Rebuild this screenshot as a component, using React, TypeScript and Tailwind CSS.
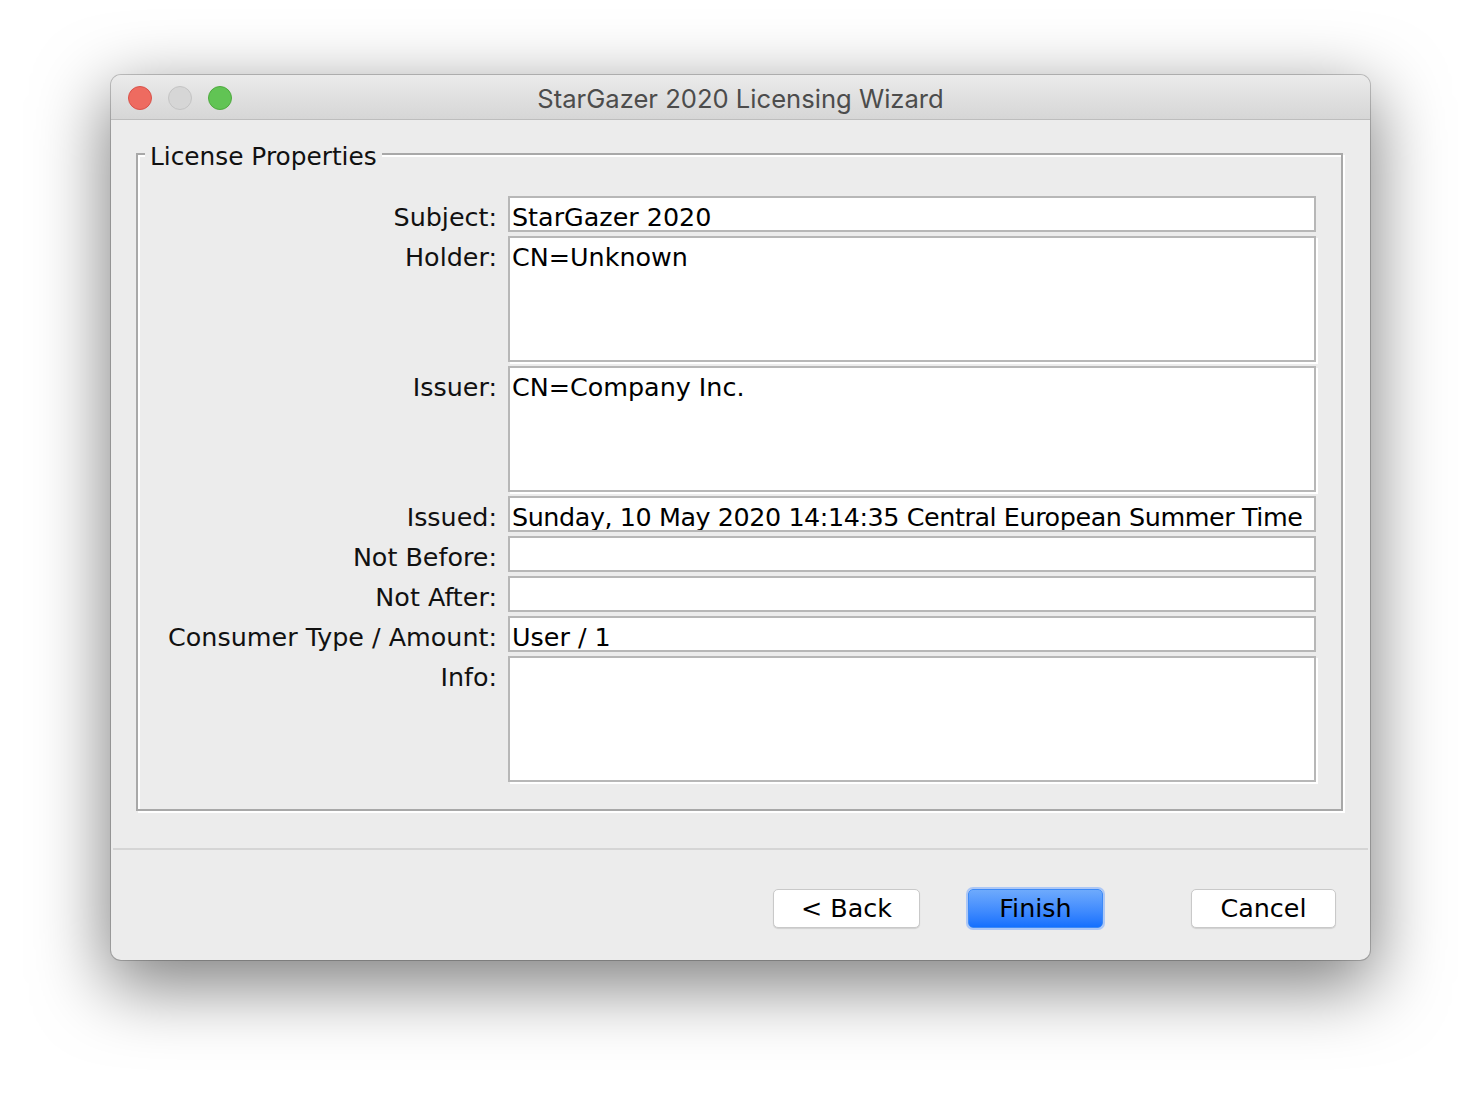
import React from "react";

const ui = { fontFamily: '"DejaVu Sans", "Noto Sans", sans-serif' };
const titleFont = { fontFamily: 'Inter, "Noto Sans", sans-serif' };

type Row = { label: string; value: string; tall?: boolean; tight?: boolean };

const rows: Row[] = [
  { label: "Subject:", value: "StarGazer 2020" },
  { label: "Holder:", value: "CN=Unknown", tall: true },
  { label: "Issuer:", value: "CN=Company Inc.", tall: true },
  { label: "Issued:", value: "Sunday, 10 May 2020 14:14:35 Central European Summer Time", tight: true },
  { label: "Not Before:", value: "" },
  { label: "Not After:", value: "" },
  { label: "Consumer Type / Amount:", value: "User / 1" },
  { label: "Info:", value: "", tall: true },
];

function TrafficLights() {
  return (
    <div className="flex items-center gap-[16px] pl-[17px] pt-[2px]">
      <span className="block h-[24px] w-[24px] rounded-full border border-[#d9524a] bg-[#ee6b60]" />
      <span className="block h-[24px] w-[24px] rounded-full border border-[#c4c4c4] bg-[#d6d6d6]" />
      <span className="block h-[24px] w-[24px] rounded-full border border-[#4faa3f] bg-[#61c454]" />
    </div>
  );
}

function Field({ row }: { row: Row }) {
  return (
    <>
      <div className="h-[36px] text-right text-[25.4px] leading-[42px] text-[#111] whitespace-nowrap">
        {row.label}
      </div>
      <div
        className={
          row.tall
            ? "h-[126px] border-2 border-[#b7b7b7] bg-white pl-[2px] text-[25.4px] leading-[38px] text-black shadow-[2px_2px_0_#fff]"
            : "h-[36px] border-2 border-[#b7b7b7] bg-white pl-[2px] text-[25.4px] leading-[38px] text-black whitespace-nowrap overflow-hidden"
        }
      >
        <span className={row.tight ? "tracking-[-0.42px]" : ""}>{row.value}</span>
      </div>
    </>
  );
}

function Button({ children, primary }: { children: React.ReactNode; primary?: boolean }) {
  if (primary) {
    return (
      <button className="flex h-[39px] w-[135px] items-center justify-center rounded-[5px] border border-[#3d8af7] bg-gradient-to-b from-[#6eaafc] to-[#1470fe] text-[25.4px] text-[#000] shadow-[0_0_0_2px_rgba(120,170,255,0.55)]">
        <span className="text-[#000]">{children}</span>
      </button>
    );
  }
  return (
    <button className="flex h-[39px] w-full items-center justify-center rounded-[5px] border border-[#c9c9c9] bg-white text-[25.4px] text-black shadow-[0_1px_1px_rgba(0,0,0,0.12)]">
      {children}
    </button>
  );
}

export default function App() {
  return (
    <div className="min-h-[1108px] w-[1482px] bg-white pl-[111px] pt-[75px]" style={ui}>
      <div className="flex h-[885px] w-[1259px] flex-col overflow-hidden rounded-[10px] bg-[#ececec] shadow-[0_0_0_1px_rgba(0,0,0,0.2),0_22px_70px_4px_rgba(0,0,0,0.5)]">
        {/* title bar */}
        <div className="grid h-[45px] grid-cols-[1fr_auto_1fr] items-center border-b border-[#bdbdbd] bg-gradient-to-b from-[#ebebeb] to-[#d6d6d6]">
          <TrafficLights />
          <div className="pt-[5px] text-[25.6px] text-[#4c4c4c]" style={titleFont}>
            StarGazer 2020 Licensing Wizard
          </div>
          <div />
        </div>

        {/* body */}
        <div className="flex flex-1 flex-col">
          <div className="px-[25px] pt-[33px]">
            <div className="relative h-[658px] w-[1207px] border-2 border-[#a8a8a8] shadow-[inset_2px_2px_0_#fff,2px_2px_0_#fff]">
              <div className="absolute left-[7px] top-[-14px] bg-[#ececec] px-[5px] text-[24.8px] leading-[32px] text-[#111]">
                License Properties
              </div>
              <div className="grid grid-cols-[359px_808px] gap-x-[11px] gap-y-[4px] pt-[41px]">
                {rows.map((r) => (
                  <Field key={r.label} row={r} />
                ))}
              </div>
            </div>
          </div>

          <div className="mx-[2px] mt-[37px] h-[2px] bg-[#d5d5d5]" />

          <div className="flex justify-end pr-[34px] pt-[39px]">
            <div className="w-[147px]">
              <Button>&lt; Back</Button>
            </div>
            <div className="ml-[48px]">
              <Button primary>Finish</Button>
            </div>
            <div className="ml-[88px] w-[145px]">
              <Button>Cancel</Button>
            </div>
          </div>
        </div>
      </div>
    </div>
  );
}
